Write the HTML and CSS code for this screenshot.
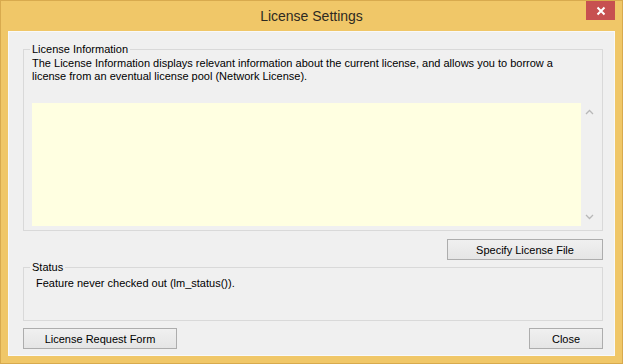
FILE: index.html
```html
<!DOCTYPE html>
<html lang="en">
<head>
  <meta charset="UTF-8" />
  <title>License Settings</title>
  <link rel="stylesheet" href="styles.css">
</head>
<body>
  <div class="window">
    <div class="titlebar">
      <span></span>
      <span class="title">License Settings</span>
      <button class="close-btn" aria-label="Close">
        <svg width="10" height="10" viewBox="0 0 10 10">
          <path d="M1.5 1.5 L8.5 8.5 M8.5 1.5 L1.5 8.5" stroke="#fff" stroke-width="2" />
        </svg>
      </button>
    </div>

    <div class="client">
      <fieldset class="group info-group">
        <legend>License Information</legend>
        <p class="desc">The License Information displays relevant information about the current license, and allows you to borrow a license from an eventual license pool (Network License).</p>
        <div class="info-box">
          <div class="info-text"></div>
          <div class="scrollbar">
            <svg width="9" height="6" viewBox="0 0 9 6"><polyline points="1,5 4.5,1.5 8,5" fill="none" stroke="#b8b8b8" stroke-width="1.3" /></svg>
            <svg width="9" height="6" viewBox="0 0 9 6"><polyline points="1,1 4.5,4.5 8,1" fill="none" stroke="#b8b8b8" stroke-width="1.3" /></svg>
          </div>
        </div>
      </fieldset>

      <div class="row row-end">
        <button class="btn btn-specify">Specify License File</button>
      </div>

      <fieldset class="group status-group">
        <legend>Status</legend>
        <p class="status-text">Feature never checked out (lm_status()).</p>
      </fieldset>

      <div class="row row-between">
        <button class="btn btn-request">License Request Form</button>
        <button class="btn btn-close">Close</button>
      </div>
    </div>
  </div>
</body>
</html>
```

FILE: styles.css
```css
body {
  margin: 0;
  font-family: "Liberation Sans", Arial, sans-serif;
  font-size: 11px;
  color: #000;
}
.window {
  box-sizing: border-box;
  width: 623px;
  height: 364px;
  display: flex;
  flex-direction: column;
  padding: 0 7px 7px 7px;
  background: #f0c768;
  border: 1px solid #d8aa4e;
}
.titlebar {
  height: 30px;
  display: grid;
  grid-template-columns: 1fr auto 1fr;
}
.title {
  line-height: 30px;
  font-size: 14px;
  color: #2e2a22;
}
.close-btn {
  justify-self: end;
  width: 29px;
  height: 19px;
  padding: 0;
  border: none;
  background: #c75050;
  display: flex;
  align-items: center;
  justify-content: center;
}
.client {
  flex: 1;
  display: flex;
  flex-direction: column;
  padding: 11px 11px 6px 14px;
  background: #f0f0f0;
  border: 1px solid #f9f9f9;
}
.group {
  margin: 0;
  min-width: 0;
  padding: 0 5px 0 8px;
  border: 1px solid #d9d9d9;
}
.group legend {
  padding: 0 2px;
  margin-left: -2px;
  line-height: 13px;
}
.desc {
  margin: 1px 0 0;
  width: 532px;
  height: 26px;
  line-height: 13px;
}
.info-box {
  margin: 20px 0 4px;
  height: 123px;
  display: flex;
}
.info-text {
  flex: 1;
  background: #ffffe1;
}
.scrollbar {
  width: 16px;
  display: flex;
  flex-direction: column;
  justify-content: space-between;
  align-items: center;
  padding: 6px 0 6px;
}
.row {
  display: flex;
}
.row-end {
  justify-content: flex-end;
  margin-top: 8px;
}
.row-between {
  justify-content: space-between;
  margin-top: 7px;
}
.btn {
  height: 21px;
  padding: 0;
  font-family: inherit;
  font-size: 11px;
  color: #000;
  background: linear-gradient(#f0f0f0, #e5e5e5);
  border: 1px solid #adadad;
}
.btn-specify {
  width: 156px;
}
.btn-request {
  width: 154px;
}
.btn-close {
  width: 74px;
}
.status-group {
  margin-top: 1px;
}
.status-text {
  margin: 3px 0 30px 4px;
  line-height: 13px;
}
```
